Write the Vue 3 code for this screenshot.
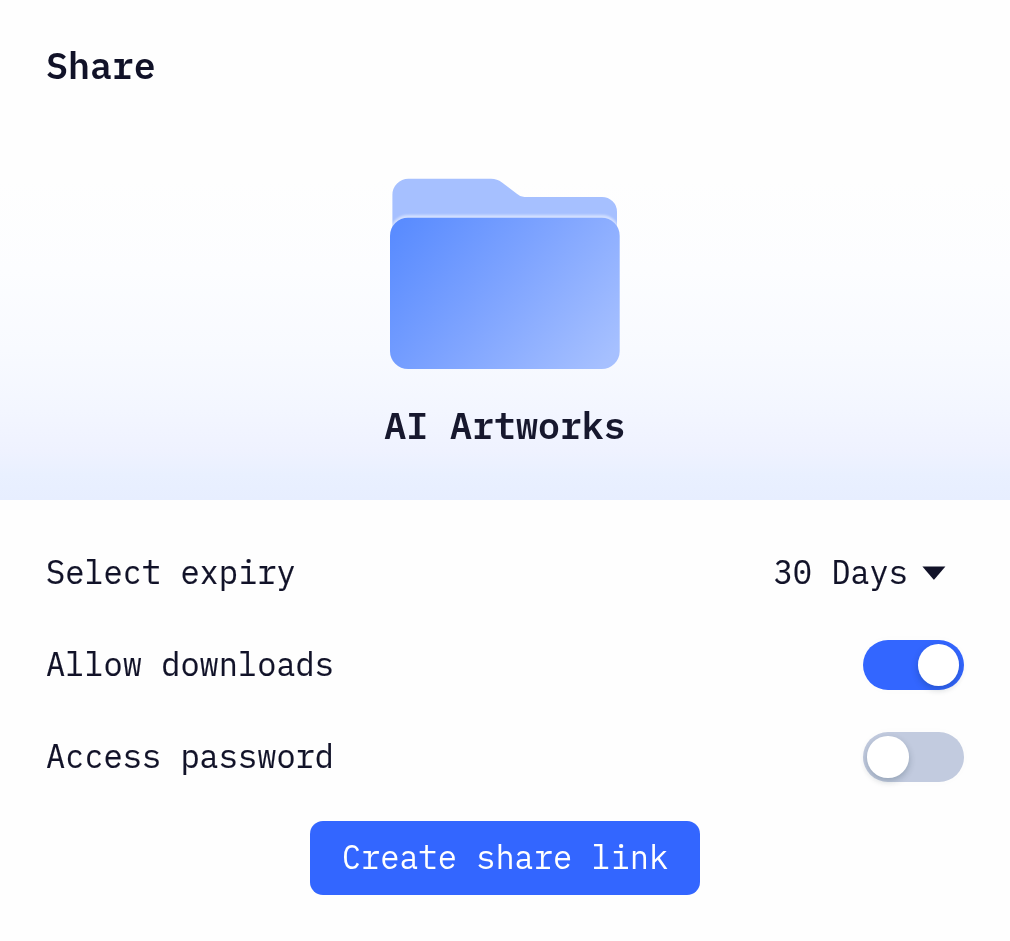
<script setup>
import { ref } from 'vue'

const expiry = ref('30 Days')
const options = ref([
  { label: 'Allow downloads', on: true },
  { label: 'Access password', on: false },
])
</script>

<template>
  <main class="share">
    <section class="hero">
      <h1 class="title">Share</h1>
      <svg class="folder" width="230" height="192" viewBox="0 0 230 192" aria-hidden="true">
        <defs>
          <linearGradient id="front" gradientUnits="userSpaceOnUse" x1="14" y1="44" x2="208" y2="196">
            <stop offset="0" stop-color="#5a8cff" />
            <stop offset="0.5" stop-color="#80a5ff" />
            <stop offset="1" stop-color="#a6c0ff" />
          </linearGradient>
          <filter id="glow" x="-10%" y="-10%" width="120%" height="120%">
            <feGaussianBlur stdDeviation="0.8" />
          </filter>
        </defs>
        <path
          fill="#a6c0ff"
          d="M2.4 60V17.7a16 16 0 0 1 16-16H101c4.3 0 7.6 1.200 11 3.800L126.500 16.600c2.500 2 4.500 3.300 8 3.300H212a15 15 0 0 1 15 15V60Z"
        />
        <rect x="0" y="38" width="229.700" height="50" rx="18" fill="#fff" fill-opacity="0.5" filter="url(#glow)" />
        <rect x="0" y="40.700" width="229.700" height="151.300" rx="18" fill="url(#front)" />
      </svg>
      <h2 class="name">AI Artworks</h2>
    </section>

    <section class="settings">
      <div class="row">
        <span class="text">Select expiry</span>
        <div class="select">
          <span class="text">{{ expiry }}</span>
          <svg width="24" height="14" viewBox="0 0 24 14" aria-hidden="true">
            <path d="M.4.500H23.400L12.500 13.300q-.6.700-1.200 0Z" fill="#111228" />
          </svg>
        </div>
      </div>
      <div v-for="option in options" :key="option.label" class="row">
        <span class="text">{{ option.label }}</span>
        <button
          class="toggle"
          :class="{ on: option.on }"
          role="switch"
          :aria-checked="option.on"
          :aria-label="option.label"
          @click="option.on = !option.on"
        >
          <i class="knob"></i>
        </button>
      </div>
    </section>

    <button class="create"><span class="caption">Create share link</span></button>
  </main>
</template>

<style>
body {
  margin: 0;
  background: #fefefe;
}
</style>

<style scoped>
.share {
  box-sizing: border-box;
  display: flex;
  flex-direction: column;
  align-items: center;
  width: 1010px;
  height: 941px;
  overflow: hidden;
  background: #fefefe;
  color: #111228;
  font-family: "IBM Plex Mono", "Liberation Mono", monospace;
  font-size: 32px;
}

.hero {
  box-sizing: border-box;
  display: flex;
  flex-direction: column;
  align-items: center;
  width: 100%;
  height: 499.500px;
  padding-top: 41px;
  background: linear-gradient(
    180deg,
    #fefefe 0,
    #fefefe 180px,
    #fcfdff 270px,
    #f8faff 350px,
    #f3f6ff 410px,
    #eff2ff 450px,
    #e9f0ff 475px,
    #e7eeff 100%
  );
}

.title,
.name {
  margin: 0;
  font-size: 36.600px;
  font-weight: 600;
  line-height: 46px;
  white-space: pre;
  transform: scaleY(1.04);
}

.title {
  align-self: flex-start;
  margin-left: 46px;
}

.folder {
  display: block;
  margin-top: 90px;
}

.name {
  margin-top: 32px;
  color: #17182e;
}

.settings {
  box-sizing: border-box;
  display: flex;
  flex-direction: column;
  width: 100%;
  padding: 27.500px 46.500px 0 46px;
}

.row {
  display: flex;
  align-items: center;
  justify-content: space-between;
  height: 92px;
  line-height: 40px;
  -webkit-text-stroke: 0.150px currentColor;
}

.text {
  padding-bottom: 3px;
  transform: scaleY(1.04);
}

.select {
  display: flex;
  align-items: center;
  gap: 14px;
  margin-right: 17.500px;
}

.toggle {
  box-sizing: border-box;
  display: flex;
  align-items: center;
  justify-content: flex-start;
  width: 101px;
  height: 50.500px;
  padding: 0 4.500px;
  border: 0;
  border-radius: 26px;
  background: #c2cbdf;
  box-shadow: 0 0 12px rgba(0, 0, 0, 0.015);
}

.toggle.on {
  justify-content: flex-end;
  background: #3366ff;
}

.knob {
  width: 41.500px;
  height: 41.500px;
  border-radius: 50%;
  background: #fff;
  box-shadow: 0 3px 7px rgba(0, 35, 50, 0.24);
}

.create {
  width: 390px;
  height: 74px;
  margin-top: 18px;
  padding: 0 0 3px;
  border: 0;
  border-radius: 13px;
  background: #3366ff;
  color: #fff;
  font: inherit;
  line-height: 40px;
}

.caption {
  display: inline-block;
  transform: scaleY(1.04);
}
</style>
